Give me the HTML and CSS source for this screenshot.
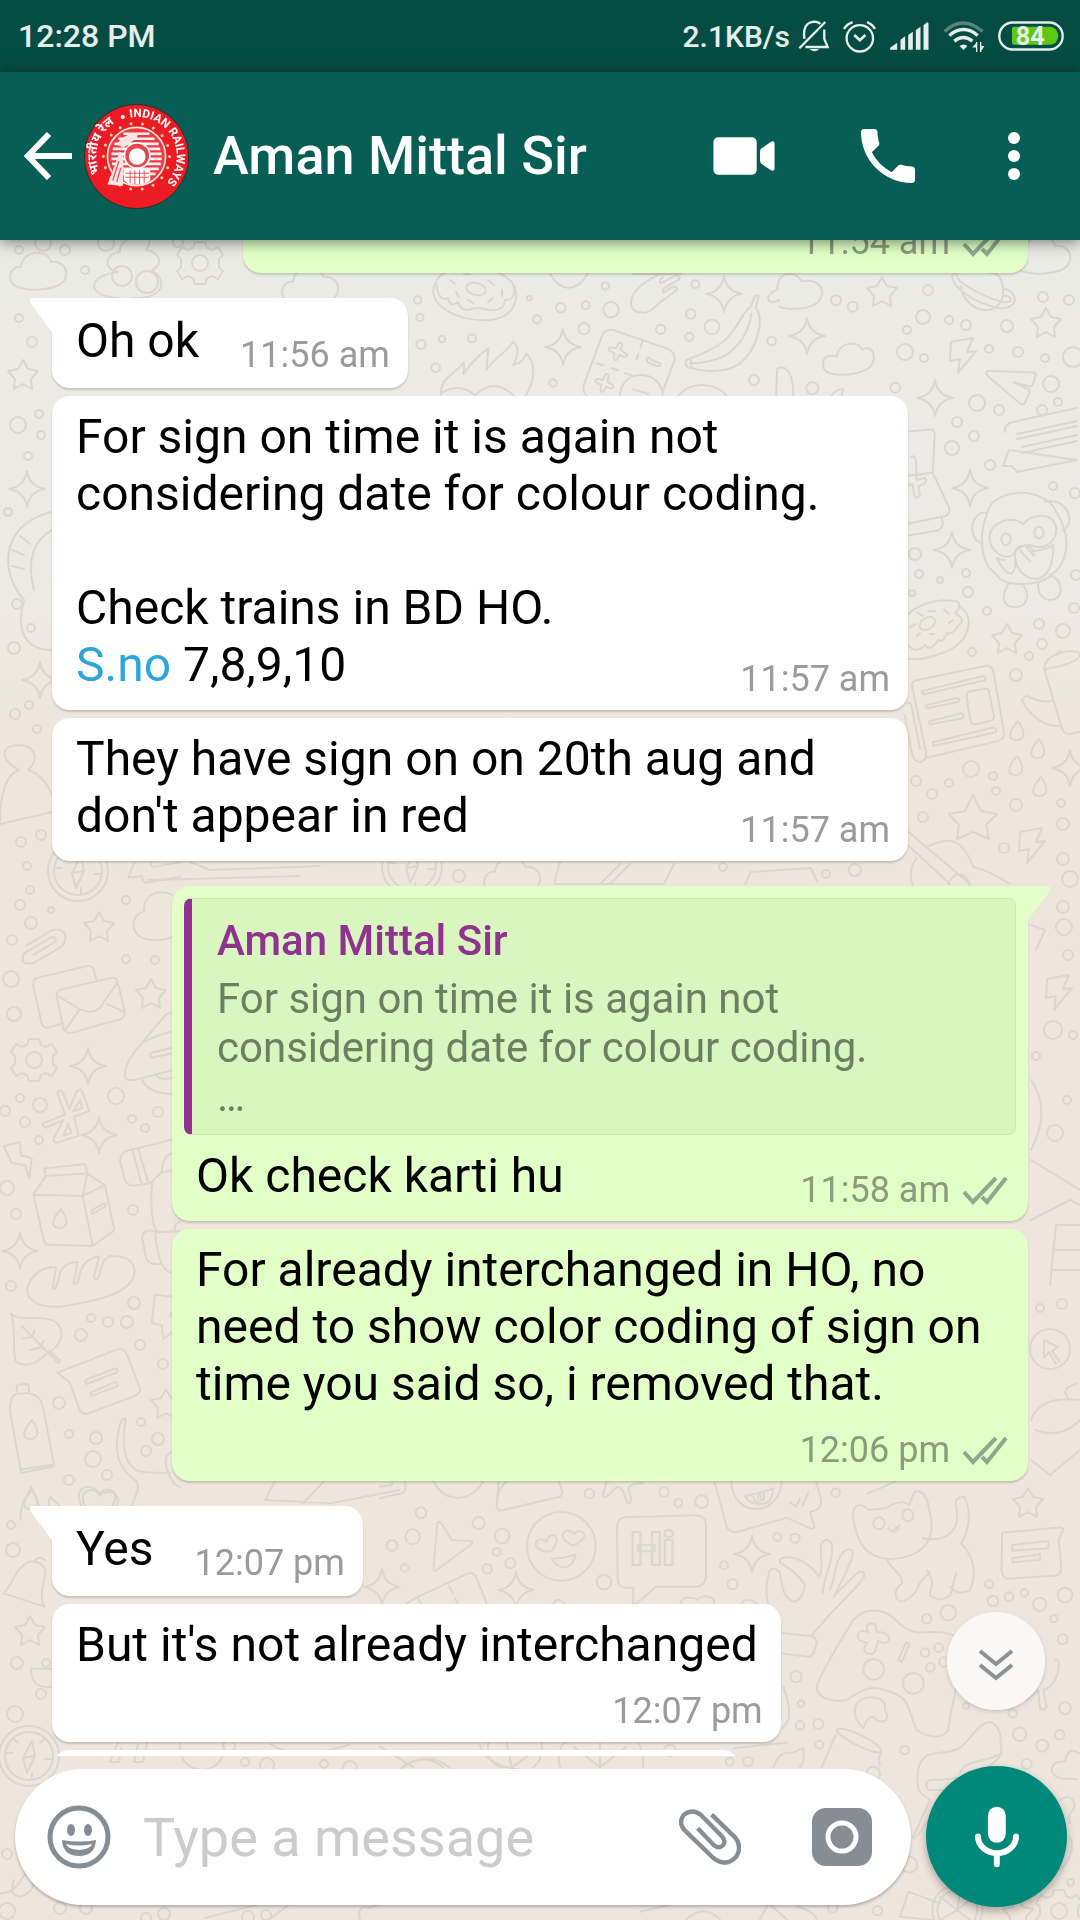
FILE: index.html
```html
<!DOCTYPE html>
<html lang="en">
<head>
<meta charset="utf-8">
<meta name="viewport" content="width=device-width, initial-scale=1">
<title>Aman Mittal Sir</title>
<link rel="stylesheet" href="styles.css">
</head>
<body>
<svg class="wallpaper" viewBox="0 0 1080 1920" preserveAspectRatio="xMidYMin slice" aria-hidden="true">
  <defs>
    <path id="spark" d="M0-18Q2-3 18 0Q3 2 0 18Q-2 3-18 0Q-3-2 0-18Z"/>
    <path id="star" d="M0-16L5-7L15-5L8 3L9 13L0 8L-9 13L-8 3L-15-5L-5-7Z"/>
    <path id="bolt" d="M-12-14L10-18L4-4L13-5L-5 17L-3 3L-13 5Z"/>
    <path id="cloud" d="M-17 13C-34 10-29-10-17-8C-16-25 10-27 13-13C30-15 34 5 19 11C9 15-7 16-17 13Z"/>
    <path id="drop" d="M2-10C12 4 6 9 0 9C-8 9-8 1 2-10Z"/>
    <path id="gear" d="M-5-21L5-21L7-15L12-13L18-16L23-8L19-4L19 4L23 8L18 16L12 13L7 15L5 21L-5 21L-7 15L-12 13L-18 16L-23 8L-19 4L-19-4L-23-8L-18-16L-12-13L-7-15ZM8 0A8 8 0 1 0-8 0A8 8 0 1 0 8 0"/>
    <path id="heart" d="M0 14C-24 2-17-13-7-12Q-2-12 0-6Q4-14 11-12C21-9 17 6 0 14Z"/>
    <g id="compass"><circle r="30"/><circle r="24"/><path d="M3-15L6 0L-2 17L-6 2ZM-6 2L6 0M-22-3h6M22 3h-6M3 22v-5M-15-17l4 4M15-17l-4 4"/></g>
    <g id="donut"><path d="M-38-16C-50 4-20 24 16 22C40 20 46 0 40-12C30-34-30-38-38-16C-36 0-32 2-26 0Q-24 10-16 4Q-14 12-6 12Q4 8 14 12Q30 14 31 2Q42 2 40-12"/><ellipse cx="2" cy="-9" rx="10" ry="6" transform="rotate(12 2 -9)"/><path d="M-24-18l5 4M-18-6l3 5M14-18l6 5M28-8v6M-6 2l5 3M14 4l5-4M-10-24h6"/></g>
    <g id="note"><path d="M-38-16Q-39-24-30-26L34-40M34 12L-26 24L-31 18L-40 18L-34 2Z"/><path d="M-26-14L34-27M-26-9L34-22M-21-1L34-13M-21 5L34-7"/></g>
  </defs>
  <g class="doodles">
    <use href="#cloud" x="38" y="275"/><use href="#gear" x="200" y="263"/><use href="#cloud" x="310" y="290"/>
    <path d="M118 272C100 268 108 252 120 252C118 240 136 238 144 226Q154 240 146 250C160 252 164 264 152 270C172 284 158 300 132 298M118 272C84 276 88 298 120 298"/>
    <circle cx="122" cy="276" r="10"/><circle cx="147" cy="282" r="11"/>
    <use href="#star" x="23" y="376"/><use href="#spark" x="27" y="489"/><use href="#spark" x="40" y="680"/>
    <path d="M60 510C0 520-2 570 24 600C16 630 24 650 52 650M52 530C34 540 26 560 34 590M12 550l12 5M12 566l12 3M20 536l10 8"/>
    <path d="M19 770C0 760 0 745 19 745C38 746 38 762 28 770M19 770C4 775 0 800 0 824L52 812M28 770Q44 775 52 795"/>
    <circle cx="19" cy="250" r="4"/><circle cx="43" cy="243" r="8"/><circle cx="65" cy="250" r="5"/><circle cx="106" cy="243" r="8"/><circle cx="85" cy="270" r="4"/><circle cx="178" cy="242" r="5"/><circle cx="18" cy="425" r="8"/><circle cx="39" cy="414" r="4"/><circle cx="41" cy="435" r="4"/><circle cx="28" cy="456" r="4"/><circle cx="8" cy="512" r="4"/><circle cx="17" cy="604" r="5"/><circle cx="14" cy="648" r="6"/><circle cx="31" cy="628" r="4"/><circle cx="29" cy="705" r="4"/><circle cx="15" cy="714" r="5"/><circle cx="37" cy="729" r="4"/><circle cx="41" cy="835" r="5"/><circle cx="21" cy="842" r="5"/><circle cx="19" cy="318" r="4"/><circle cx="32" cy="342" r="5"/>
    <use href="#donut" x="474" y="298"/>
    <g transform="translate(400 240) scale(.33333)">
      <path d="M450 102Q475 143 505 143Q540 143 562 102M843 102L700 102M780 102C720 130 690 160 693 195Q700 220 735 218C760 215 770 190 790 180L830 150Q835 135 815 142L790 158Q785 148 800 140L838 118Q842 102 820 110L782 130Q775 120 790 110"/>
      <path d="M1138 180C1100 200 1090 165 1132 148C1130 90 1190 90 1205 125C1260 110 1285 160 1250 190C1220 210 1160 210 1138 200M1270 375C1265 345 1295 345 1310 350C1315 305 1375 300 1385 328C1430 310 1430 370 1405 385C1360 410 1270 415 1270 375Z"/>
      <path d="M1065 168Q1075 162 1076 172L1067 203C1095 240 1070 330 1020 370C980 400 910 395 875 385Q850 380 860 360C910 340 960 320 985 290C1020 250 1030 215 1052 200ZM1054 222C1045 280 1020 320 970 350Q920 370 870 370M870 355Q880 375 872 385"/>
      <path d="M607 285Q615 265 640 270L800 325Q825 335 824 360L788 455M607 285L553 430Q545 455 560 466M728 300l-7 22M715 342l-6 17M592 370l18 6M635 385l18 5M675 400l20 6M740 355Q742 348 755 360L780 370Q786 380 770 378L742 366Z"/>
      <path id="plus" d="M657 308Q668 305 666 315L662 330L680 342Q685 350 672 350L658 345L650 360Q640 362 642 350L644 340L628 332Q622 325 632 322L648 325Z"/>
      <use href="#plus" x="-40" y="95"/>
      <path d="M660 466C665 380 785 390 788 466M700 448L745 462M836 466C870 425 940 425 980 466M1128 466L1132 385C1160 375 1180 400 1180 466M1295 466Q1310 445 1330 448L1325 466"/>
      <path d="M122 466C120 410 170 400 190 368Q195 385 190 402C220 360 240 340 266 325Q260 360 260 388C290 350 320 335 340 305Q365 325 340 375Q370 370 378 340C410 370 405 420 378 466M122 460Q180 425 225 466Q280 410 340 466"/>
      <circle cx="53" cy="180" r="11"/><circle cx="60" cy="232" r="11"/><circle cx="63" cy="313" r="14"/><circle cx="126" cy="297" r="10"/><circle cx="216" cy="295" r="12"/><circle cx="107" cy="383" r="13"/><circle cx="388" cy="174" r="7"/><circle cx="411" cy="238" r="12"/><circle cx="482" cy="203" r="14"/><circle cx="557" cy="196" r="12"/><circle cx="552" cy="266" r="17"/><circle cx="616" cy="138" r="11"/><circle cx="633" cy="209" r="23"/><circle cx="782" cy="268" r="14"/><circle cx="886" cy="133" r="12"/><circle cx="872" cy="222" r="14"/><circle cx="936" cy="261" r="22"/><circle cx="868" cy="291" r="12"/><circle cx="1115" cy="303" r="13"/><circle cx="1308" cy="181" r="15"/><circle cx="1358" cy="200" r="15"/><circle cx="1062" cy="420" r="15"/><circle cx="1237" cy="445" r="18"/><circle cx="459" cy="429" r="11"/><circle cx="1486" cy="443" r="15"/>
    </g>
    <use href="#spark" x="563" y="347"/><use href="#spark" x="724" y="294"/><use href="#spark" x="807" y="336"/><use href="#star" x="882" y="293"/>
    <use href="#cloud" x="1042" y="259"/><use href="#star" x="1046" y="324"/><use href="#bolt" x="963" y="356"/><use href="#spark" x="935" y="398"/><use href="#spark" x="970" y="488"/><use href="#spark" x="952" y="550"/><use href="#star" x="1007" y="640"/><use href="#spark" x="1070" y="768"/><use href="#drop" x="1016" y="731"/><use href="#drop" x="1037" y="749"/><use href="#drop" x="1015" y="766"/><use href="#drop" x="1039" y="787"/><use href="#bolt" x="1032" y="846"/>
    <path d="M973 795L981 811L997 814L986 825L989 839L973 832L957 839L959 825L949 814L965 811Z"/>
    <use href="#note" x="1043" y="448"/>
    <g transform="translate(900 240) scale(.33333 .42092)">
      <path d="M183 110C190 165 290 195 310 130C310 85 290 78 270 78M160 78C140 100 210 150 300 162C360 165 355 120 310 116M170 78C160 95 230 130 310 148C345 150 335 132 310 132"/>
      <path d="M258 316Q260 310 275 311L400 315Q410 316 407 322L397 345Q393 350 385 347L340 338L385 355Q392 360 387 365L375 387Q368 394 360 388L265 325Z"/>
      <path d="M24 455L95 450Q105 452 104 465L98 553L147 635Q150 655 130 657L24 674M24 702L115 690Q135 680 125 660M24 560L98 553M34 515Q48 510 48 530L50 570L75 565Q85 575 70 580L55 585L60 605Q50 620 42 605L38 580L24 582"/>
      <path d="M262 648C280 585 440 585 470 648C520 710 500 770 455 795C430 820 310 830 290 795C240 770 235 700 262 648ZM262 648C215 640 195 710 250 722M435 622C500 610 530 670 490 690M370 675C340 655 275 665 268 705C270 740 310 760 335 750Q370 715 405 728C440 735 475 710 468 680C455 645 395 650 370 675M345 745C345 720 395 720 400 740Q440 735 460 725C460 770 445 800 410 805C370 805 345 780 345 745M290 755Q300 760 315 760M290 755Q315 795 335 792Q350 780 345 760M360 738l30 25M380 730l22 20M325 818C300 850 310 875 350 872C390 870 385 830 370 822M415 815C405 860 480 870 482 830C480 805 460 800 450 795"/>
      <ellipse cx="318" cy="711" rx="14" ry="14"/><ellipse cx="417" cy="695" rx="14" ry="14"/>
      <path d="M24 890C60 860 130 850 175 860Q185 875 165 885Q200 905 175 915Q165 935 140 935Q130 960 115 950Q90 980 75 962Q50 985 24 962M175 870C230 890 210 960 130 980Q70 1000 24 995M30 920l18-8M50 885l20 8M85 882h20M132 878l14 10M146 910l12-6M90 936h12M50 940l10-5"/><ellipse cx="82" cy="911" rx="24" ry="14" transform="rotate(-20 82 911)"/>
      <path d="M36 1060Q32 1050 50 1046L255 1012Q275 1010 280 1025L312 1170Q315 1185 295 1190L80 1230M36 1060L78 1215Q80 1240 60 1240Q40 1240 35 1215L15 1130M24 1100Q30 1095 35 1110L60 1210M65 1072L250 1036Q260 1040 255 1046L70 1080ZM77 1105L172 1088Q185 1090 175 1097L80 1113ZM87 1144L185 1124Q195 1128 187 1136L90 1151ZM98 1193L280 1158Q295 1162 285 1170L100 1202ZM200 1085Q198 1075 210 1072L255 1066Q265 1066 267 1072L282 1130Q282 1140 272 1142L225 1151Q213 1151 211 1142Z"/>
      <path d="M433 1015C440 975 540 970 540 985Q540 1005 433 1020L482 1150Q490 1180 515 1173L540 1168M470 985Q475 970 487 980M455 1095C425 1100 400 1090 380 1083Q360 1090 370 1100C400 1140 440 1155 480 1155"/>
      <path d="M24 1405L210 1530M24 1438L150 1530M80 1442C160 1410 190 1430 220 1490Q260 1495 330 1530M50 1468Q20 1500 40 1535M145 1530Q160 1500 190 1510Q210 1520 208 1535"/>
    </g>
    <circle cx="928" cy="290" r="5"/><circle cx="923" cy="317" r="7"/><circle cx="949" cy="320" r="4"/><circle cx="966" cy="325" r="5"/><circle cx="1007" cy="326" r="6"/><circle cx="907" cy="330" r="4"/><circle cx="905" cy="352" r="8"/><circle cx="924" cy="358" r="4"/><circle cx="989" cy="349" r="4"/><circle cx="1018" cy="352" r="5"/><circle cx="1045" cy="358" r="4"/><circle cx="1073" cy="357" r="10"/><circle cx="1043" cy="297" r="5"/><circle cx="1069" cy="300" r="5"/><circle cx="1051" cy="384" r="8"/><circle cx="977" cy="403" r="8"/><circle cx="999" cy="410" r="5"/><circle cx="1042" cy="410" r="5"/><circle cx="1058" cy="402" r="4"/><circle cx="957" cy="422" r="5"/><circle cx="974" cy="436" r="5"/><circle cx="952" cy="448" r="7"/><circle cx="990" cy="465" r="5"/><circle cx="1053" cy="486" r="4"/><circle cx="1075" cy="493" r="5"/><circle cx="915" cy="554" r="6"/><circle cx="919" cy="574" r="4"/><circle cx="940" cy="580" r="3"/><circle cx="966" cy="573" r="4"/><circle cx="968" cy="592" r="5"/><circle cx="912" cy="593" r="3"/><circle cx="987" cy="611" r="4"/><circle cx="1039" cy="624" r="5"/><circle cx="1063" cy="631" r="7"/><circle cx="1042" cy="644" r="5"/><circle cx="1029" cy="656" r="4"/><circle cx="1016" cy="675" r="6"/><circle cx="972" cy="652" r="4"/><circle cx="1074" cy="608" r="5"/><circle cx="1076" cy="575" r="5"/><circle cx="971" cy="769" r="8"/><circle cx="993" cy="776" r="4"/><circle cx="996" cy="791" r="4"/><circle cx="949" cy="783" r="4"/><circle cx="932" cy="794" r="5"/><circle cx="916" cy="781" r="5"/><circle cx="923" cy="817" r="5"/><circle cx="1016" cy="805" r="6"/><circle cx="1061" cy="803" r="4"/><circle cx="1063" cy="824" r="6"/><circle cx="1004" cy="848" r="5"/><circle cx="1063" cy="859" r="6"/><circle cx="1070" cy="879" r="8"/>
    <use href="#compass" x="78" y="871"/><use href="#compass" x="412" y="866"/><use href="#cloud" x="512" y="880"/><use href="#star" x="99" y="928"/><use href="#star" x="151" y="995"/><use href="#gear" x="34" y="1060"/><use href="#spark" x="88" y="1066"/><use href="#spark" x="99" y="1135"/><use href="#spark" x="20" y="1251"/><use href="#star" x="166" y="1405"/><use href="#heart" x="99" y="1502"/><use href="#drop" x="59" y="1219"/><use href="#drop" x="30" y="1430"/><use href="#drop" x="30" y="1500"/>
    <g transform="translate(0 860) scale(.33333 .42092)">
      <path d="M385 42L405 2M385 42L425 38Q430 55 440 54L540 40M455 5Q450 18 465 16L540 5M540 95C500 65 430 70 432 122C390 130 380 190 465 190Q510 190 530 175"/>
      <path d="M80 203L155 167Q190 160 197 182Q195 200 180 208L100 245Q65 250 68 232Q70 222 80 218L155 183Q170 182 167 193L100 226"/>
      <path d="M190 388L145 398Q130 400 125 388L100 300Q98 285 112 280L262 252Q280 250 283 265L290 287M170 325Q168 312 182 308L335 280Q350 278 353 290L374 360Q376 372 362 378L212 411Q195 412 190 400ZM172 322L240 355Q285 370 305 345L353 290M237 357L195 405M320 342L370 360"/>
      <path d="M172 550Q185 545 190 555L208 592L230 550Q242 540 248 552L268 597L222 610L236 655L170 672Q157 668 162 660L190 618L140 635Q125 635 130 625L195 605L175 560ZM220 597L240 570L247 590ZM190 655L205 626L214 648Z"/>
      <path d="M540 360L500 365L425 435C395 460 365 500 378 520Q385 525 405 522L540 495M425 435Q480 410 540 405M540 442L455 458Q445 465 455 470L540 455M425 522Q450 560 540 555M470 512Q480 525 520 517"/>
      <path d="M12 680L60 670L63 702L95 708L88 757L75 725L35 720Z"/>
      <path d="M540 660L375 692Q355 705 363 725L375 760Q385 775 400 774L450 768L485 742L540 735M398 690L425 771M415 687L445 766M485 740C490 700 510 692 540 698M457 765C450 800 455 880 475 884L540 882M465 882Q425 875 427 900L438 945Q445 962 480 960M465 882Q475 980 520 982M540 860Q520 865 525 880"/>
      <path d="M135 745L133 733L255 722L262 745L137 751L100 795L132 905Q135 914 145 914L278 917L343 880L315 773L262 745L248 798L100 795M248 798L278 917M248 798L315 773M274 833L313 815L317 823L277 841Z"/>
      <path d="M85 1010C95 985 130 965 168 968L158 1018Q170 1025 180 980Q195 955 233 955L220 1006Q232 1015 240 980Q255 945 297 942L282 992Q295 1005 303 970Q315 935 345 942C400 940 415 975 395 1000C360 1040 260 1050 190 1060C110 1068 70 1040 85 1010Z"/>
      <path d="M33 1077C60 1100 110 1080 150 1092C195 1100 200 1150 140 1172C110 1200 70 1205 48 1192C35 1170 50 1110 33 1077ZM65 1107L175 1195L180 1190L148 1165M70 1137L97 1133L103 1117M90 1164L122 1158L130 1142"/>
      <path d="M540 1040L465 1032L455 1100L485 1105L490 1138L540 1108M540 1050L508 1083L540 1086"/>
      <path d="M172 1218L355 1162Q370 1160 378 1170L420 1255Q422 1265 405 1273L265 1315Q250 1318 240 1308L208 1240ZM255 1236L345 1208Q358 1210 352 1217L260 1245ZM270 1266L345 1240Q358 1243 352 1250L275 1273Z"/>
      <path d="M52 1268L50 1250Q50 1245 85 1245L88 1268C120 1270 125 1290 130 1305L163 1440L70 1455Q63 1458 62 1450L30 1310C28 1290 35 1270 52 1268L88 1266M62 1448L155 1437"/>
      <path d="M377 1330Q370 1320 360 1340C340 1400 350 1440 400 1470Q420 1480 412 1500L395 1535M377 1330C365 1390 370 1430 410 1450Q440 1458 510 1455M145 1535L150 1512L180 1535M540 1408Q490 1400 498 1440Q510 1480 540 1490"/>
    </g>
    <circle cx="27" cy="866" r="4"/><circle cx="30" cy="890" r="4"/><circle cx="20" cy="905" r="5"/><circle cx="31" cy="923" r="6"/><circle cx="12" cy="940" r="5"/><circle cx="11" cy="979" r="8"/><circle cx="14" cy="1014" r="7"/><circle cx="51" cy="910" r="3"/><circle cx="126" cy="900" r="4"/><circle cx="126" cy="959" r="4"/><circle cx="155" cy="960" r="4"/><circle cx="20" cy="1098" r="4"/><circle cx="5" cy="1111" r="5"/><circle cx="40" cy="1105" r="7"/><circle cx="25" cy="1122" r="5"/><circle cx="39" cy="1140" r="4"/><circle cx="116" cy="1096" r="8"/><circle cx="158" cy="1112" r="5"/><circle cx="132" cy="1119" r="4"/><circle cx="145" cy="1128" r="4"/><circle cx="7" cy="1188" r="7"/><circle cx="16" cy="1214" r="5"/><circle cx="133" cy="1210" r="5"/><circle cx="11" cy="1286" r="5"/><circle cx="134" cy="1303" r="6"/><circle cx="127" cy="1322" r="6"/><circle cx="108" cy="1322" r="5"/><circle cx="91" cy="1318" r="4"/><circle cx="81" cy="1335" r="6"/><circle cx="140" cy="1345" r="5"/><circle cx="163" cy="1364" r="5"/><circle cx="59" cy="1403" r="6"/><circle cx="69" cy="1434" r="4"/><circle cx="96" cy="1438" r="6"/><circle cx="93" cy="1459" r="8"/><circle cx="69" cy="1480" r="5"/><circle cx="107" cy="1475" r="5"/><circle cx="141" cy="1422" r="4"/><circle cx="158" cy="1439" r="6"/><circle cx="146" cy="1451" r="5"/><circle cx="459" cy="876" r="6"/><circle cx="723" cy="867" r="4"/><circle cx="855" cy="870" r="6"/><circle cx="826" cy="874" r="4"/>
    <path d="M148 880L300 876M190 862L210 870L320 866M560 862l-6 22h110l10-20M745 884l6-12 60-4 6 14M600 884l20-20M610 884l20-20"/>
    <use href="#bolt" x="1059" y="993"/><circle cx="1063" cy="907" r="6"/><circle cx="1064" cy="927" r="8"/><circle cx="1068" cy="955" r="5"/><circle cx="1053" cy="1030" r="9"/><circle cx="1073" cy="1035" r="4"/><circle cx="1055" cy="1133" r="8"/><circle cx="1067" cy="1100" r="4"/><circle cx="1036" cy="1056" r="4"/><circle cx="1062" cy="1304" r="5"/><circle cx="1040" cy="1308" r="4"/><circle cx="1050" cy="1349" r="20"/>
    <path d="M1044 1340L1058 1347L1052 1351L1060 1362M1044 1340V1358L1049 1352L1056 1364M1031 1080Q1052 1110 1031 1150M1031 1160L1080 1190M1031 1220L1070 1200L1080 1205M1056 1225h24M1056 1225L1050 1285M1054 1250h26M1052 1270h28M1031 1420Q1040 1395 1080 1400M1035 1430Q1060 1440 1080 1420M1031 1460L1050 1475L1080 1450M1036 950L1045 930L1031 925M1068 1398Q1060 1388 1076 1384"/>
    <g transform="translate(380 1480) scale(.33333)">
      <path d="M0 55L65 40Q80 35 75 0M0 20L35 15L38 0M160 3C190 70 275 70 310 3M355 3L350 80Q355 95 370 90L540 50Q555 40 535 3M385 0Q355 20 352 60M680 3L668 50Q675 60 705 25Q720 15 730 35L742 68Q755 75 752 50L745 25Q755 10 790 10M1003 3L1040 140Q1050 160 1075 155L1220 113L1290 145Q1305 150 1302 135L1290 95Q1330 90 1322 55L1308 3M1095 48Q1140 40 1180 25Q1175 75 1140 72Q1110 75 1095 48M1120 50l6 18 10-2-2-20M1140 42l5 20 8-4-3-18M1230 68L1250 80L1260 55M1268 75L1285 38"/>
      <path d="M1053 3C1060 120 1200 110 1205 3"/>
      <path d="M172 130Q178 120 186 132L215 180L272 183Q282 188 272 195L170 270Q158 277 161 262ZM495 215Q465 205 467 190Q475 170 500 185Q505 160 525 168Q540 180 515 213ZM580 198Q545 180 548 163Q560 140 582 162Q595 145 612 160Q620 175 580 198ZM515 236Q555 235 587 223Q580 260 555 262Q530 262 515 236Z"/>
      <circle cx="544" cy="199" r="103"/>
      <path d="M735 112L950 106Q978 110 978 135V290Q975 318 950 320H828L770 370Q755 375 760 360V323H735Q712 320 713 295L711 140Q712 115 735 112Z"/>
      <path d="M80 370L110 352L265 280Q280 275 290 295L320 370M207 318l12 22M225 355l8 15M112 352l10 18M520 370Q530 350 555 370M903 370Q905 350 930 353Q950 355 953 360Q965 345 985 350Q1005 355 1003 370M1085 370Q1095 350 1130 370"/>
      <path d="M1165 370C1150 330 1165 290 1168 275Q1180 258 1198 275C1210 310 1200 345 1240 365C1260 365 1270 340 1275 315C1250 280 1230 265 1200 248Q1195 230 1230 232C1280 240 1300 270 1318 290C1335 260 1315 220 1325 190Q1340 170 1355 190C1365 240 1330 290 1328 340M1350 328C1370 290 1360 240 1395 212Q1420 200 1418 225C1410 260 1380 310 1362 350M1370 340L1430 280Q1455 265 1452 290C1430 330 1390 350 1295 466M1200 458L1295 468Q1310 475 1310 490L1300 520Q1295 530 1285 530L1200 520"/>
      <circle cx="1248" cy="590" r="17"/><circle cx="1263" cy="671" r="10"/><circle cx="1260" cy="736" r="13"/><circle cx="1315" cy="732" r="15"/><circle cx="1318" cy="794" r="12"/>
      <path d="M1425 705Q1420 660 1465 652Q1520 650 1515 690Q1530 720 1510 725Q1490 725 1480 710Q1460 710 1450 745Q1430 725 1425 705M1370 750C1380 730 1510 790 1503 815C1490 830 1370 770 1370 750ZM1367 765L1325 862M1503 820Q1490 840 1500 855M1180 862Q1200 810 1230 820L1270 805Q1275 840 1260 862M1210 620Q1235 690 1225 720Q1215 740 1200 750M1060 805L1220 788"/>
      <path d="M325 787C315 840 350 862 370 862M485 787Q490 840 460 862M380 787L395 862L455 820M540 862C530 820 545 787 560 787M790 862C790 820 780 787 770 787M660 862L580 800M660 862L740 800M660 862V790M0 800Q50 830 100 862M65 862Q130 815 190 862"/>
      <circle cx="123" cy="98" r="16"/><circle cx="98" cy="170" r="22"/><circle cx="36" cy="196" r="16"/><circle cx="74" cy="264" r="11"/><circle cx="296" cy="129" r="18"/><circle cx="366" cy="168" r="22"/><circle cx="350" cy="216" r="12"/><circle cx="391" cy="250" r="15"/><circle cx="322" cy="266" r="14"/><circle cx="672" cy="306" r="22"/><circle cx="628" cy="41" r="14"/><circle cx="852" cy="36" r="14"/><circle cx="895" cy="69" r="12"/><circle cx="965" cy="65" r="19"/><circle cx="1192" cy="171" r="12"/><circle cx="1245" cy="175" r="14"/><circle cx="1032" cy="256" r="12"/><circle cx="1058" cy="313" r="15"/><circle cx="1367" cy="38" r="13"/><circle cx="870" cy="812" r="18"/><circle cx="1049" cy="845" r="12"/><circle cx="1104" cy="845" r="14"/>
    </g>
    <text class="doodle-word" x="630" y="1565">Hi</text>
    <use href="#spark" x="752" y="1554"/><use href="#spark" x="516" y="1590"/><use href="#spark" x="382" y="1587"/>
    <g transform="translate(0 1480) scale(.68878 .33333)">
      <path d="M1240 130C1235 80 1245 60 1262 90L1285 85Q1310 55 1320 75L1328 35Q1345 25 1350 100C1360 180 1340 235 1290 237C1250 230 1245 170 1240 130ZM1288 240C1295 270 1310 280 1310 310C1295 330 1300 365 1310 365Q1330 350 1335 310L1350 275M1345 270C1360 310 1350 325 1350 345Q1365 370 1380 345L1388 280M1340 175C1380 190 1395 140 1388 80Q1385 50 1400 50C1415 110 1400 180 1395 190C1420 240 1415 300 1408 330Q1390 350 1380 320M1290 145Q1298 165 1305 145M1298 148l8-12"/>
      <ellipse cx="1276" cy="130" rx="8" ry="18"/><ellipse cx="1318" cy="106" rx="8" ry="18"/>
      <path d="M1455 158L1540 142Q1546 145 1542 155L1537 180L1541 265Q1540 285 1530 287L1462 296Q1455 290 1454 270ZM1470 195L1522 183V205L1470 212ZM1470 235L1510 223V240L1470 247Z"/>
      <path d="M5 340C20 310 20 270 42 245Q60 240 66 270C65 310 55 350 65 380ZM50 245Q55 225 65 240M45 565L75 568M45 565C45 610 55 625 75 620M400 0L385 60L480 70L580 30M470 5L440 70M115 60C110 10 140 10 145 45Q165 20 172 60Q165 110 148 135Q125 120 115 60M30 120C28 70 40 50 45 20Q60 80 60 120"/>
      <path d="M1260 40L1300 5M0 1240Q20 1240 30 1200L45 1160M20 1200Q12 1250 30 1250Q45 1240 48 1215"/>
    </g>
    <use href="#star" x="1028" y="1504"/><use href="#star" x="30" y="1632"/><use href="#compass" x="29" y="1756"/>
    <circle cx="13" cy="1550" r="7"/><circle cx="11" cy="1525" r="4"/><circle cx="17" cy="1663" r="6"/><circle cx="46" cy="1663" r="4"/><circle cx="41" cy="1694" r="5"/><circle cx="15" cy="1714" r="8"/><circle cx="7" cy="1854" r="5"/><circle cx="60" cy="1908" r="6"/><circle cx="86" cy="1908" r="6"/><circle cx="7" cy="1911" r="8"/><circle cx="146" cy="1918" r="5"/><circle cx="164" cy="1914" r="6"/><circle cx="248" cy="1917" r="6"/><circle cx="266" cy="1915" r="5"/><circle cx="229" cy="1746" r="6"/><circle cx="245" cy="1762" r="4"/><circle cx="267" cy="1765" r="7"/><circle cx="324" cy="1764" r="4"/><circle cx="350" cy="1768" r="7"/><circle cx="202" cy="1748" r="22"/>
    <path d="M118 1742l-8 20h9l2-14M138 1744l-4 18h9l4-20M270 1744Q300 1762 350 1744M400 1770Q425 1748 450 1768M480 1745Q485 1765 520 1770M205 1918L260 1904M290 1904l-22 16M360 1920q-4-16 10-12q8-6 30-4"/>
    <g transform="translate(640 1560) scale(.33333)">
      <path d="M530 380C540 340 610 230 640 180Q670 145 720 153C770 165 770 200 820 215C860 225 880 205 940 225M960 240C970 340 930 440 925 510C900 545 850 525 830 510C800 440 810 410 740 392C690 370 660 395 620 420C570 430 530 410 530 380M775 300L798 247L808 252L785 307Z"/>
      <path d="M680 197Q692 185 706 194L712 216L730 218Q752 226 746 240Q742 252 728 248L714 244L706 272Q698 288 682 280Q670 274 674 262L680 248L660 242Q648 232 656 220Q662 208 676 214L684 216Z"/>
      <circle cx="701" cy="328" r="31"/><circle cx="820" cy="370" r="31"/><circle cx="855" cy="278" r="13"/><circle cx="896" cy="263" r="13"/><circle cx="871" cy="322" r="13"/><circle cx="912" cy="306" r="14"/><circle cx="925" cy="158" r="23"/><circle cx="860" cy="176" r="14"/><circle cx="1047" cy="73" r="12"/><circle cx="1059" cy="123" r="16"/><circle cx="1107" cy="110" r="13"/><circle cx="1153" cy="99" r="11"/><circle cx="1199" cy="133" r="20"/><circle cx="1275" cy="105" r="22"/><circle cx="1242" cy="176" r="11"/><circle cx="1268" cy="238" r="15"/><circle cx="1275" cy="445" r="18"/><circle cx="1118" cy="460" r="13"/><circle cx="978" cy="438" r="9"/><circle cx="1139" cy="523" r="20"/><circle cx="1207" cy="557" r="18"/><circle cx="1259" cy="524" r="14"/><circle cx="1160" cy="611" r="15"/><circle cx="794" cy="570" r="13"/><circle cx="700" cy="640" r="20"/><circle cx="808" cy="914" r="24"/><circle cx="1292" cy="967" r="10"/><circle cx="578" cy="1043" r="14"/><circle cx="713" cy="1052" r="14"/><circle cx="952" cy="1050" r="60"/><circle cx="952" cy="1050" r="75"/>
      <path d="M836 690C820 600 860 580 890 580C980 570 960 560 1020 500Q1060 465 1080 520L1085 580C1050 640 960 660 870 660Q850 670 865 690L930 690M960 640C970 600 1030 610 1085 580M870 720L820 830M836 690Q850 710 870 718M820 835Q830 840 900 720M1320 580C1290 560 1280 580 1275 605C1230 600 1220 640 1260 655L1310 658M1160 420L1195 390L1200 450M1245 300Q1260 290 1255 330Q1245 380 1210 390L1220 440Q1210 460 1200 440M1260 720C1290 700 1310 720 1300 750Q1280 770 1290 790M1290 830Q1310 880 1260 930M805 995L780 1070L880 1080M805 995L900 1030M952 1050L900 1010M952 1050L960 990M952 1050L1000 1010M952 1050L900 1080M952 1050L990 1080M0 1055L110 1030M140 1078Q190 1030 240 1078M360 1078L385 1030L440 1078M470 1040Q520 1050 530 1078"/>
    </g>
    <use href="#gear" x="1059" y="1911"/><use href="#star" x="1018" y="1914"/>
  </g>
</svg>

<div class="app">
  <div class="status">
    <span class="clock">12:28 PM</span>
    <span class="net">2.1KB/s</span>
    <svg width="31" height="32" viewBox="590 62 92 95" fill="none" stroke="#e6edeb" stroke-width="7"><path d="M594 146L671 68M609 118Q602 70 638 67Q650 67 656 74M668 90V118L678 142H612"/><path d="M624 148H653Q640 161 624 148Z" fill="#e6edeb" stroke="none"/></svg>
    <svg width="33" height="33" viewBox="728 60 100 99" fill="none" stroke="#e6edeb" stroke-width="7"><circle cx="779" cy="115" r="40"/><path d="M762 105L779 121L796 105" stroke-width="8"/><path d="M731 87Q738 73 757 66M825 87Q818 73 801 66"/></svg>
    <svg width="39" height="28" viewBox="872 64 116 84" fill="#e6edeb"><path d="M872 147V141L893 126V147ZM903 147V117L917 107V147ZM926 147V103L940 93V147ZM949 147V88L963 78V147ZM972 147V74L983 65Q987 65 987 70V147Z"/></svg>
    <svg width="41" height="31" viewBox="1030 64 122 94" fill="none" stroke="#e6edeb" stroke-width="10"><path d="M1034 96Q1088 44 1149 96" opacity=".35"/><path d="M1048 108Q1091 72 1134 108M1063 125Q1091 103 1118 125"/><path d="M1079 140Q1091 130 1103 140L1091 152Z" fill="#e6edeb" stroke="none"/><path d="M1131 128V158M1143 128V158M1131 132L1122 142H1131M1143 154L1151 142H1143" stroke-width="4"/></svg>
    <svg width="66" height="30" viewBox="1194 64 198 89"><rect x="1198" y="68" width="190" height="81" rx="40" fill="none" stroke="#e6edeb" stroke-width="7"/><path d="M1242 81H1350A25 27 0 0 1 1350 135H1242Q1236 135 1236 129V87Q1236 81 1242 81Z" fill="#5ac814"/><text class="battery-level" x="1291" y="136">84</text></svg>
  </div>

  <header class="bar">
    <button class="back" aria-label="Back"><svg width="48" height="48" viewBox="0 0 48 48" fill="none" stroke="#fff" stroke-width="6"><path d="M25 2L4 24L25 46M4 24H48"/></svg></button>
    <svg class="avatar" viewBox="42 39 314 314" role="img" aria-label="Indian Railways emblem">
      <defs><path id="arcRight" d="M180 80A117 117 0 0 1 272 289"/><path id="arcLeft" d="M90 246A120 120 0 0 1 156 84"/></defs>
      <circle cx="199" cy="196" r="157" fill="#33302f"/><circle cx="199" cy="196" r="154" fill="#ed1c24"/>
      <text class="emblem"><textPath href="#arcRight">INDIAN RAILWAYS</textPath></text>
      <text class="emblem hindi"><textPath href="#arcLeft">भारतीय रेल</textPath></text>
      <circle cx="158" cy="78" r="6" fill="#fff"/>
      <circle cx="199" cy="196" r="99" fill="none" stroke="#f6d9a8" stroke-width="9" stroke-linecap="round" stroke-dasharray="0 34.56"/>
      <circle cx="199" cy="196" r="87" fill="#ee3a42" stroke="#fbe9dc" stroke-width="5"/>
      <path d="M160 128H238M145 143H253M133 158H265M128 173H270M124 188H274M124 203H274M126 218H272M132 233H266M142 248H256" stroke="#fbeeee" stroke-width="8"/>
      <path d="M140 160Q160 128 200 126Q206 134 196 144L160 170Z" fill="#fbe4e4"/>
      <circle cx="201" cy="193" r="38" fill="#e8444b" stroke="#fff" stroke-width="5"/><circle cx="201" cy="196" r="25" fill="#fff"/>
      <path d="M162 234H240V268L222 280H178L162 268Z" fill="#fff"/><path d="M166 246H236M166 258H236M180 238V276M194 238V278M208 238V278M222 238V276" stroke="#f0525a" stroke-width="3"/>
      <path d="M148 182Q128 240 112 280L158 284Q162 240 158 186Z" fill="#fbe4e4"/><path d="M146 210L128 268M152 230L140 272" stroke="#f0525a" stroke-width="4"/>
    </svg>
    <h1>Aman Mittal Sir</h1>
    <button class="act" aria-label="Video call"><svg width="62" height="38" viewBox="338 410 187 115" fill="#fff"><rect x="339" y="411" width="131" height="113" rx="14"/><path d="M480 453Q480 448 485 444L512 425Q524 418 524 432V504Q524 517 512 510L485 492Q480 488 480 483Z"/></svg></button>
    <button class="act" aria-label="Voice call"><svg width="54" height="54" viewBox="3 3 18 18" fill="#fff"><path d="M6.62 10.79c1.44 2.83 3.76 5.14 6.59 6.59l2.2-2.2c.27-.27.67-.36 1.02-.24 1.12.37 2.33.57 3.57.57.55 0 1 .45 1 1V20c0 .55-.45 1-1 1-9.39 0-17-7.61-17-17 0-.55.45-1 1-1h3.5c.55 0 1 .45 1 1 0 1.25.2 2.45.57 3.57.11.35.03.74-.25 1.02l-2.2 2.2z"/></svg></button>
    <button class="act more" aria-label="More options"><svg width="12" height="48" viewBox="0 0 12 48" fill="#fff"><circle cx="6" cy="6" r="6"/><circle cx="6" cy="24" r="6"/><circle cx="6" cy="42" r="6"/></svg></button>
  </header>

  <div class="body">
  <main class="chat">
    <article class="msg out stack cut">
      <span class="meta"><time>11:54 am</time><svg class="ticks" viewBox="0 0 46 29"><path d="M2 16L11 26L34 2M20 21L25 26L44 2"/></svg></span>
    </article>
    <article class="msg in tail short">
      <p>Oh ok</p><span class="meta"><time>11:56 am</time></span>
    </article>
    <article class="msg in wide">
      <p>For sign on time it is again not<br>considering date for colour coding.<br><br>Check trains in BD HO.<br><a href="#sno">S.no</a> 7,8,9,10</p><span class="meta"><time>11:57 am</time></span>
    </article>
    <article class="msg in wide">
      <p>They have sign on on 20th aug and don't appear in red</p><span class="meta"><time>11:57 am</time></span>
    </article>
    <article class="msg out tail quoted">
      <blockquote><strong>Aman Mittal Sir</strong><span>For sign on time it is again not<br>considering date for colour coding.<br>…</span></blockquote>
      <div class="line"><p>Ok check karti hu</p><span class="meta"><time>11:58 am</time><svg class="ticks" viewBox="0 0 46 29"><path d="M2 16L11 26L34 2M20 21L25 26L44 2"/></svg></span></div>
    </article>
    <article class="msg out stack">
      <p>For already interchanged in HO, no need to show color coding of sign on time you said so, i removed that.</p><span class="meta"><time>12:06 pm</time><svg class="ticks" viewBox="0 0 46 29"><path d="M2 16L11 26L34 2M20 21L25 26L44 2"/></svg></span>
    </article>
    <article class="msg in tail short">
      <p>Yes</p><span class="meta"><time>12:07 pm</time></span>
    </article>
    <article class="msg in stack">
      <p>But it's not already interchanged</p><span class="meta"><time>12:07 pm</time></span>
    </article>
    <article class="msg in next"></article>
  </main>
  <button class="jump" aria-label="Scroll to latest"><svg width="34" height="32" viewBox="0 0 34 32" fill="none" stroke="#8b9297" stroke-width="4"><path d="M1 2L17 15L33 2M1 16L17 29L33 16"/></svg></button>
  </div>

  <footer class="compose">
    <div class="pill">
      <button aria-label="Emoji"><svg width="64" height="64" viewBox="0 0 64 64"><circle cx="32" cy="32" r="29" fill="none" stroke="#878d94" stroke-width="5"/><ellipse cx="24" cy="25" rx="4" ry="6" fill="#878d94"/><ellipse cx="41" cy="25" rx="4" ry="6" fill="#878d94"/><path d="M15 35Q32 38 49 35Q48 51 32 51Q16 51 15 35Z" fill="#878d94"/><path d="M19 39Q32 42 45 39Q44 44 32 45Q20 44 19 39Z" fill="#fff"/></svg></button>
      <input type="text" placeholder="Type a message" aria-label="Type a message">
      <button aria-label="Attach"><svg width="62" height="56" viewBox="115 746 186 168" fill="none" stroke="#878d94" stroke-width="13" stroke-linejoin="round"><path d="M213 763L284 832Q306 860 286 890Q255 922 218 893L130 808Q112 784 130 763Q155 743 181 764L243 827Q257 843 247 855Q235 867 220 855L171 804"/></svg></button>
      <button class="camera" aria-label="Camera"><svg width="60" height="58" viewBox="0 0 60 58"><rect width="60" height="58" rx="14" fill="#878d94"/><circle cx="30" cy="29" r="14" fill="none" stroke="#fff" stroke-width="5"/></svg></button>
    </div>
    <button class="mic" aria-label="Record voice message"><svg width="44" height="62" viewBox="1005 739 133 185"><rect x="1044" y="740" width="54" height="109" rx="27" fill="#fff"/><path d="M1014 830A57 50 0 0 0 1129 830M1071 882V914" fill="none" stroke="#fff" stroke-width="18" stroke-linecap="round"/></svg></button>
  </footer>
</div>
</body>
</html>
```
FILE: styles.css
```css
* { box-sizing: border-box; }

body {
  margin: 0;
  font-family: Roboto, "Noto Sans", sans-serif;
  background: #eee6dd;
}

button {
  display: flex;
  flex: none;
  align-items: center;
  justify-content: center;
  margin: 0;
  padding: 0;
  border: 0;
  background: none;
}

svg { display: block; flex: none; }

/* wallpaper */
.wallpaper {
  position: fixed;
  inset: 0;
  width: 100%;
  height: 100%;
  background: linear-gradient(#ebebe6 12%, #edeae5 30%, #eee6dd 38%);
}
.doodles { fill: none; stroke: #dad7cf; stroke-width: 2px; stroke-linejoin: round; stroke-linecap: round; }
.doodles * { vector-effect: non-scaling-stroke; }
.doodle-word { font: 900 46px Roboto, sans-serif; stroke-width: 2px; }

.app {
  position: relative;
  display: flex;
  flex-direction: column;
  height: 100vh;
}

/* status bar */
.status {
  display: flex;
  align-items: center;
  gap: 14px;
  height: 72px;
  padding: 0 16px 0 18px;
  background: #054d44;
  color: #e6edeb;
  font-weight: 500;
}
.clock { flex: 1; font-size: 32px; }
.net { font-size: 30px; margin-right: -6px; }
.battery-level { font: 700 76px Roboto, sans-serif; fill: #e6edeb; text-anchor: middle; }

/* chat header */
.bar {
  position: relative;
  z-index: 1;
  display: flex;
  align-items: center;
  height: 168px;
  padding: 0 12px 0 24px;
  background: #075e54;
  color: #fff;
  box-shadow: 0 2px 14px rgba(0, 0, 0, .5);
}
.back { width: 48px; margin-right: 12px; }
.avatar { width: 105px; height: 105px; margin-right: 24px; }
.emblem { font: 700 35px Roboto, "Noto Sans", sans-serif; fill: #fff; }
.hindi { font-size: 38px; }
.bar h1 { flex: 1; margin: 0; font-size: 54px; font-weight: 500; line-height: 64px; }
.act { width: 144px; height: 144px; }
.more { width: 108px; }

/* messages */
.body { position: relative; flex: 1; min-height: 0; display: flex; }
.chat {
  flex: 1;
  display: flex;
  flex-direction: column;
  gap: 8px;
  padding: 0 52px;
  overflow: hidden;
}
.msg {
  position: relative;
  flex: none;
  display: grid;
  max-width: calc(100% - 120px);
  padding: 12px 18px 10px 24px;
  border-radius: 18px;
  background: #fff;
  color: #000;
  font-size: 48px;
  line-height: 57px;
  box-shadow: 0 2px 2px rgba(0, 0, 0, .16);
}
.msg p { grid-area: 1 / 1; margin: 0 0 7px; padding-right: 5px; }
.msg a { color: #2ca5dd; text-decoration: none; }
.in { align-self: flex-start; }
.out { align-self: flex-end; padding-right: 20px; background: #e1ffc7; }
.wide { width: 100%; }

.meta {
  grid-area: 1 / 1;
  place-self: end;
  display: flex;
  align-items: center;
  gap: 12px;
  color: #9b9b9b;
  font-size: 36px;
  line-height: 42px;
}
.out .meta { color: #8b9c7c; }
.ticks { width: 46px; height: 29px; fill: none; stroke: #90a88e; stroke-width: 4px; }

.stack .meta { grid-area: 2 / 1; margin-top: 10px; }
.short { display: flex; gap: 36px; padding-top: 14px; }
.short p { margin-bottom: 9px; }
.short .meta { align-self: flex-end; margin-bottom: 2px; }

.tail { margin-top: 17px; }
.in.tail { border-top-left-radius: 0; }
.out.tail { border-top-right-radius: 0; }
.tail::before {
  content: "";
  position: absolute;
  top: 0;
  width: 24px;
  height: 36px;
  background: inherit;
}
.in.tail::before { left: -22px; clip-path: polygon(1px 0, 100% 0, 100% 100%, 22px 34px, 1px 6px, 0 2px); }
.out.tail::before { right: -22px; clip-path: polygon(23px 0, 0 0, 0 100%, 2px 34px, 23px 6px, 24px 2px); }

.cut { width: 785px; margin-top: -41px; }
.next { width: 688px; height: 86px; }

.quoted { display: block; width: 100%; padding: 12px 12px 10px; }
blockquote {
  margin: 0 0 12px;
  padding: 17px 24px 13px 25px;
  border: 1px solid #cde8b5;
  border-left: 8px solid #8f3290;
  border-radius: 8px;
  background: #d9f6c0;
  color: #6c7f61;
  font-size: 42px;
  line-height: 49px;
}
blockquote strong { display: block; margin-bottom: 9px; color: #8f3290; font-weight: 500; }
blockquote span { display: block; }
.line { display: grid; padding: 0 8px 0 12px; }

.jump {
  position: absolute;
  right: 35px;
  bottom: 46px;
  width: 98px;
  height: 98px;
  padding-top: 8px;
  border-radius: 50%;
  background: rgba(250, 249, 248, .95);
  box-shadow: 0 2px 4px rgba(0, 0, 0, .14);
}

/* composer */
.compose {
  display: flex;
  align-items: center;
  gap: 15px;
  padding: 10px 13px 13px 15px;
}
.pill {
  flex: 1;
  display: flex;
  align-items: center;
  min-width: 0;
  height: 136px;
  padding: 0 39px 0 32px;
  border-radius: 68px;
  background: #fff;
  box-shadow: 0 2px 3px rgba(0, 0, 0, .25);
}
.pill input {
  flex: 1;
  min-width: 0;
  margin: 0 20px 0 32px;
  padding: 2px 0 0;
  border: 0;
  outline: 0;
  background: none;
  font: 400 54px/64px Roboto, sans-serif;
}
.pill input::placeholder { color: #ccc; opacity: 1; }
.camera { margin-left: 71px; }
.mic {
  width: 141px;
  height: 141px;
  border-radius: 50%;
  background: #00897b;
  box-shadow: 0 4px 8px rgba(0, 0, 0, .3);
}
```
